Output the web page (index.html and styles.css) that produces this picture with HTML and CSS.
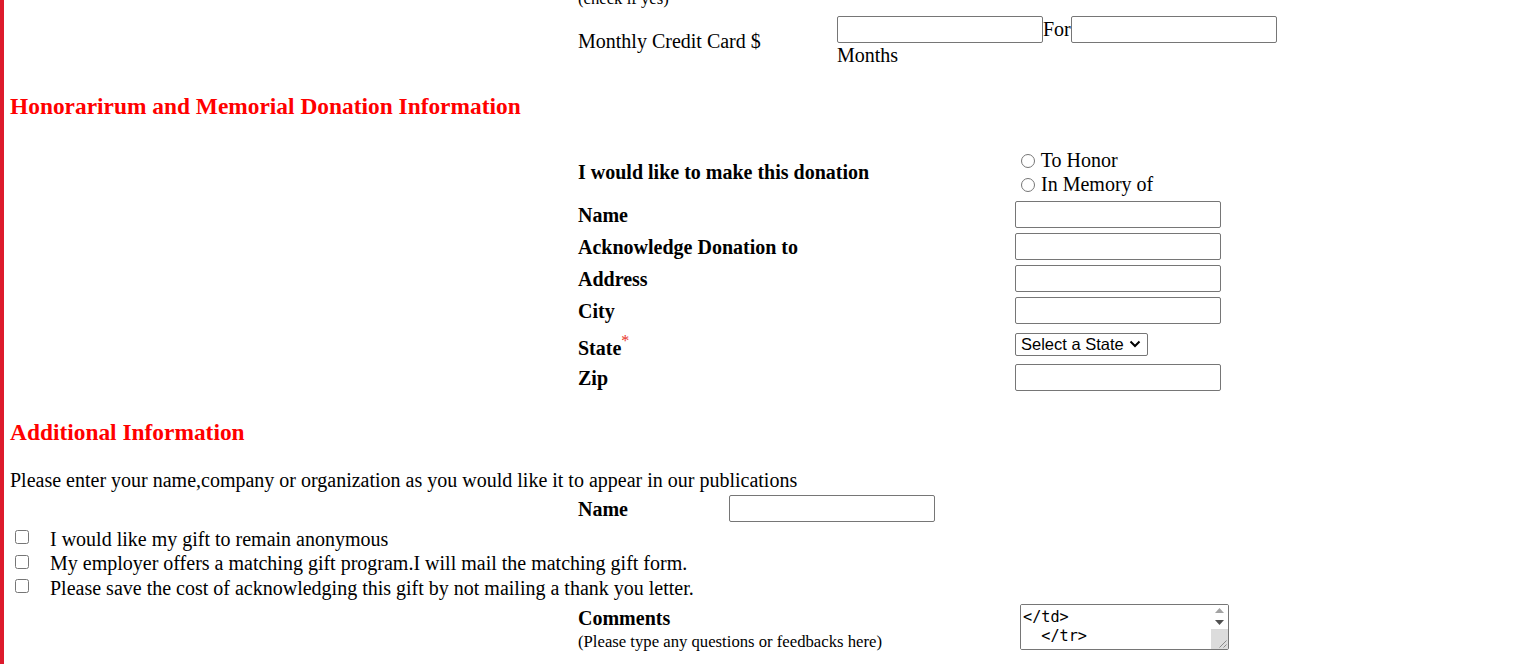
FILE: index.html
```html
<!DOCTYPE html>
<html>
<head>
<meta charset="utf-8">
<title>Donation Form</title>
<link rel="stylesheet" href="styles.css">
</head>
<body>
<div class="page">
  <div class="cut-note">(check if yes)</div>

  <div class="pay-row">
    <div class="label">Monthly Credit Card $</div>
    <div class="pay-field">
      <div class="pay-line"><input type="text" class="text"><span>For</span><input type="text" class="text"></div>
      <div class="months">Months</div>
    </div>
  </div>

  <h3 class="section-title first">Honorarirum and Memorial Donation Information</h3>

  <div class="honor-grid">
    <div class="label bold">I would like to make this donation</div>
    <div class="radios">
      <label class="radio-line"><input type="radio" name="kind"> To Honor</label>
      <label class="radio-line"><input type="radio" name="kind"> In Memory of</label>
    </div>

    <div class="label bold">Name</div>
    <div><input type="text" class="text"></div>

    <div class="label bold">Acknowledge Donation to</div>
    <div><input type="text" class="text"></div>

    <div class="label bold">Address</div>
    <div><input type="text" class="text"></div>

    <div class="label bold">City</div>
    <div><input type="text" class="text"></div>

    <div class="label bold state-label">State<sup class="req">*</sup></div>
    <div class="state-cell">
      <select class="state-select">
        <option>Select a State</option>
      </select>
    </div>

    <div class="label bold">Zip</div>
    <div><input type="text" class="text"></div>
  </div>

  <h3 class="section-title second">Additional Information</h3>

  <div class="intro">Please enter your name,company or organization as you would like it to appear in our publications</div>

  <div class="name-row">
    <div class="label bold">Name</div>
    <div><input type="text" class="text"></div>
  </div>

  <div class="checks">
    <label class="check-line"><span class="check-box"><input type="checkbox"></span><span>I would like my gift to remain anonymous</span></label>
    <label class="check-line"><span class="check-box"><input type="checkbox"></span><span>My employer offers a matching gift program.I will mail the matching gift form.</span></label>
    <label class="check-line"><span class="check-box"><input type="checkbox"></span><span>Please save the cost of acknowledging this gift by not mailing a thank you letter.</span></label>
  </div>

  <div class="comments-row">
    <div class="comments-label">
      <div class="bold">Comments</div>
      <div class="small">(Please type any questions or feedbacks here)</div>
    </div>
    <div class="comments-box">
      <textarea class="comments">&lt;/td&gt;
  &lt;/tr&gt;</textarea>
      <div class="fake-scroll">
        <div class="sb-btn">
          <svg width="9" height="5" viewBox="0 0 9 5"><path d="M0 5 L4.5 0 L9 5 Z" fill="#a3a3a3"/></svg>
        </div>
        <div class="sb-btn">
          <svg width="9" height="5" viewBox="0 0 9 5"><path d="M0 0 L4.5 5 L9 0 Z" fill="#505050"/></svg>
        </div>
        <div class="sb-corner">
          <svg width="17" height="17" viewBox="0 0 17 17"><path d="M15.5 8.5 L8.5 15.5 M15.5 12.5 L12.5 15.5" stroke="#8a8a8a" stroke-width="1"/></svg>
        </div>
      </div>
    </div>
  </div>
</div>
</body>
</html>
```

FILE: styles.css
```css
html, body {
  margin: 0;
  padding: 0;
  background: #fff;
}

body {
  font-family: "Liberation Serif", "Times New Roman", serif;
  font-size: 20px;
  color: #000;
}

.page {
  border-left: 4px solid #dd1a2c;
  padding-left: 6px;
  min-height: 664px;
  box-sizing: border-box;
  overflow: hidden;
}

.bold {
  font-weight: bold;
}

.cut-note {
  margin-left: 568px;
  margin-top: -10px;
  font-size: 16.7px;
  line-height: 18px;
  height: 18px;
}

input.text {
  box-sizing: border-box;
  width: 206px;
  height: 27px;
  margin: 0;
  border: 1px solid #767676;
  border-radius: 2px;
  padding: 1px 2px;
  font-size: 16px;
  font-family: "Liberation Sans", Arial, sans-serif;
  background: #fff;
  vertical-align: middle;
}

/* Monthly credit card row */
.pay-row {
  margin-left: 568px;
  margin-top: 8px;
  display: grid;
  grid-template-columns: 259px auto;
  align-items: center;
}

.pay-row > .label {
  padding-bottom: 2px;
}

.pay-line {
  display: flex;
  align-items: center;
  height: 27px;
}

.pay-line span {
  line-height: 27px;
}

.months {
  line-height: 24px;
  height: 24px;
}

/* Section titles */
.section-title {
  font-size: 23.4px;
  font-weight: bold;
  color: #ff0000;
  margin: 0;
  line-height: 26px;
}

.section-title.first {
  margin-top: 26px;
}

.section-title.second {
  margin-top: 28px;
}

/* Honor grid */
.honor-grid {
  margin-left: 568px;
  margin-top: 29px;
  display: grid;
  grid-template-columns: 437px auto;
  row-gap: 5px;
  align-items: center;
}

.label {
  line-height: 22px;
}

.radios {
  display: flex;
  flex-direction: column;
}

.radio-line {
  display: block;
  line-height: 24px;
  height: 24px;
}

.radio-line input {
  margin: 0 1px 0 6px;
  width: 14px;
  height: 14px;
  vertical-align: -1px;
}

.state-cell {
  height: 30px;
  display: flex;
  align-items: center;
}

.state-label {
  padding-top: 8px;
}

.req {
  color: #e8321e;
  font-size: 16px;
  font-weight: normal;
  vertical-align: 9px;
  line-height: 0;
}

.state-select {
  -webkit-appearance: none;
  appearance: none;
  box-sizing: border-box;
  width: 133px;
  height: 23px;
  margin: 0;
  font-family: "Liberation Sans", Arial, sans-serif;
  font-size: 16.5px;
  line-height: 21px;
  border: 1px solid #767676;
  border-radius: 2px;
  color: #000;
  padding: 0 0 0 5px;
  background: #fff url("data:image/svg+xml,%3Csvg xmlns='http://www.w3.org/2000/svg' width='12' height='8' viewBox='0 0 12 8'%3E%3Cpath d='M1.5 1.5 L6 6 L10.5 1.5' fill='none' stroke='%23000' stroke-width='2'/%3E%3C/svg%3E") no-repeat right 6px center;
}

/* Additional information */
.intro {
  margin-top: 25px;
  line-height: 21px;
}

.name-row {
  margin-left: 568px;
  margin-top: 4px;
  display: grid;
  grid-template-columns: 151px auto;
  align-items: center;
}

.checks {
  margin-top: 5px;
  display: flex;
  flex-direction: column;
}

.check-line {
  display: flex;
  align-items: center;
  height: 24.5px;
}

.check-box {
  width: 40px;
  display: flex;
  align-items: center;
}

.check-box input {
  margin: 0 0 0 5px;
  width: 14px;
  height: 14px;
  position: relative;
  top: -2px;
}

.comments-row {
  margin-left: 568px;
  margin-top: 1px;
  display: grid;
  grid-template-columns: 442px auto;
  align-items: start;
}

.comments-label {
  padding-top: 5px;
}

.comments-label .bold {
  line-height: 22px;
}

.small {
  font-size: 16.7px;
  line-height: 25px;
}

.comments-box {
  box-sizing: border-box;
  width: 209px;
  height: 46px;
  margin-top: 2px;
  border: 1px solid #767676;
  border-radius: 2px;
  display: flex;
  overflow: hidden;
  background: #fff;
}

.comments {
  flex: 1;
  min-width: 0;
  margin: 0;
  border: none;
  outline: none;
  font-family: "DejaVu Sans Mono", "Liberation Mono", monospace;
  font-size: 15.2px;
  line-height: 19px;
  padding: 3px 2px;
  resize: none;
  overflow: hidden;
  color: #000;
  background: #fff;
}

.fake-scroll {
  width: 17px;
  display: flex;
  flex-direction: column;
  flex-shrink: 0;
}

.sb-btn {
  height: 12px;
  display: flex;
  align-items: center;
  justify-content: center;
  background: #fff;
}

.sb-btn svg {
  display: block;
}

.sb-corner {
  flex: 1;
  background: #dcdcdc;
  display: flex;
  align-items: flex-end;
  justify-content: flex-end;
}

.sb-corner svg {
  display: block;
}
```
